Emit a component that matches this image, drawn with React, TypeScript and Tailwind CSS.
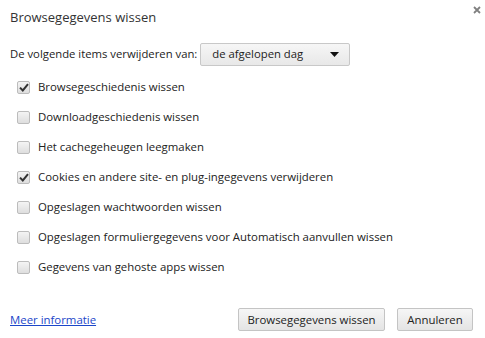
import { useState } from 'react';

const ITEMS = [
  { label: 'Browsegeschiedenis wissen', checked: true },
  { label: 'Downloadgeschiedenis wissen', checked: false },
  { label: 'Het cachegeheugen leegmaken', checked: false },
  { label: 'Cookies en andere site- en plug-ingegevens verwijderen', checked: true },
  { label: 'Opgeslagen wachtwoorden wissen', checked: false },
  { label: 'Opgeslagen formuliergegevens voor Automatisch aanvullen wissen', checked: false },
  { label: 'Gegevens van gehoste apps wissen', checked: false },
];

function Checkbox({ checked, onClick }: { checked: boolean; onClick: () => void }) {
  return (
    <button
      onClick={onClick}
      className="w-[13px] h-[13px] rounded-[2px] border border-[#bcbcbc] bg-gradient-to-b from-[#f4f4f4] to-[#dedede] flex items-center justify-center shrink-0"
    >
      {checked && (
        <svg width="10" height="9" viewBox="0 0 10 9">
          <path d="M1 4.6 L3.8 7.4 L9 1.2" fill="none" stroke="#333" strokeWidth="2" />
        </svg>
      )}
    </button>
  );
}

export default function App() {
  const [items, setItems] = useState(ITEMS);

  const toggle = (i: number) =>
    setItems(items.map((it, j) => (j === i ? { ...it, checked: !it.checked } : it)));

  return (
    <div className="relative w-[485px] h-[338px] bg-white text-[#222] font-['Open_Sans',sans-serif] flex flex-col">
      {/* sluitknop */}
      <svg className="absolute left-[473px] top-[6px]" width="8" height="8" viewBox="0 0 8 8">
        <path d="M1 1 L7 7 M7 1 L1 7" stroke="#808080" strokeWidth="1.8" />
      </svg>

      <h1 className="pl-[10px] pt-[7px] text-[13px] leading-[20px] text-[#333]">Browsegegevens wissen</h1>

      <div className="flex items-center pl-[10px] mt-[16px] text-[11.3px]">
        <span className="mr-[3px]">De volgende items verwijderen van:</span>
        <div className="w-[150px] h-[23px] border border-[#c8c8c8] rounded-[2px] bg-gradient-to-b from-[#f6f6f6] to-[#e8e8e8] flex items-center justify-between pl-[11px] pr-[10px]">
          <span>de afgelopen dag</span>
          <svg width="9" height="5" viewBox="0 0 9 5">
            <path d="M0 0 H9 L4.5 5 Z" fill="#111" />
          </svg>
        </div>
      </div>

      <div className="flex flex-col mt-[6px] text-[11.4px]">
        {items.map((it, i) => (
          <div key={it.label} className="h-[30px] flex items-center pl-[17px]">
            <Checkbox checked={it.checked} onClick={() => toggle(i)} />
            <span className="ml-[8px]">{it.label}</span>
          </div>
        ))}
      </div>

      <div className="flex items-center justify-between mt-auto mb-[7px] pl-[10px] pr-[12px] text-[11.4px]">
        <a href="#" className="text-[#1b46c9] underline">Meer informatie</a>
        <div className="flex gap-[12px]">
          <button className="w-[147px] h-[23px] border border-[#c4c4c4] rounded-[2px] bg-gradient-to-b from-[#f6f6f6] to-[#e4e4e4]">
            Browsegegevens wissen
          </button>
          <button className="w-[76px] h-[23px] border border-[#c4c4c4] rounded-[2px] bg-gradient-to-b from-[#f6f6f6] to-[#e4e4e4]">
            Annuleren
          </button>
        </div>
      </div>
    </div>
  );
}
